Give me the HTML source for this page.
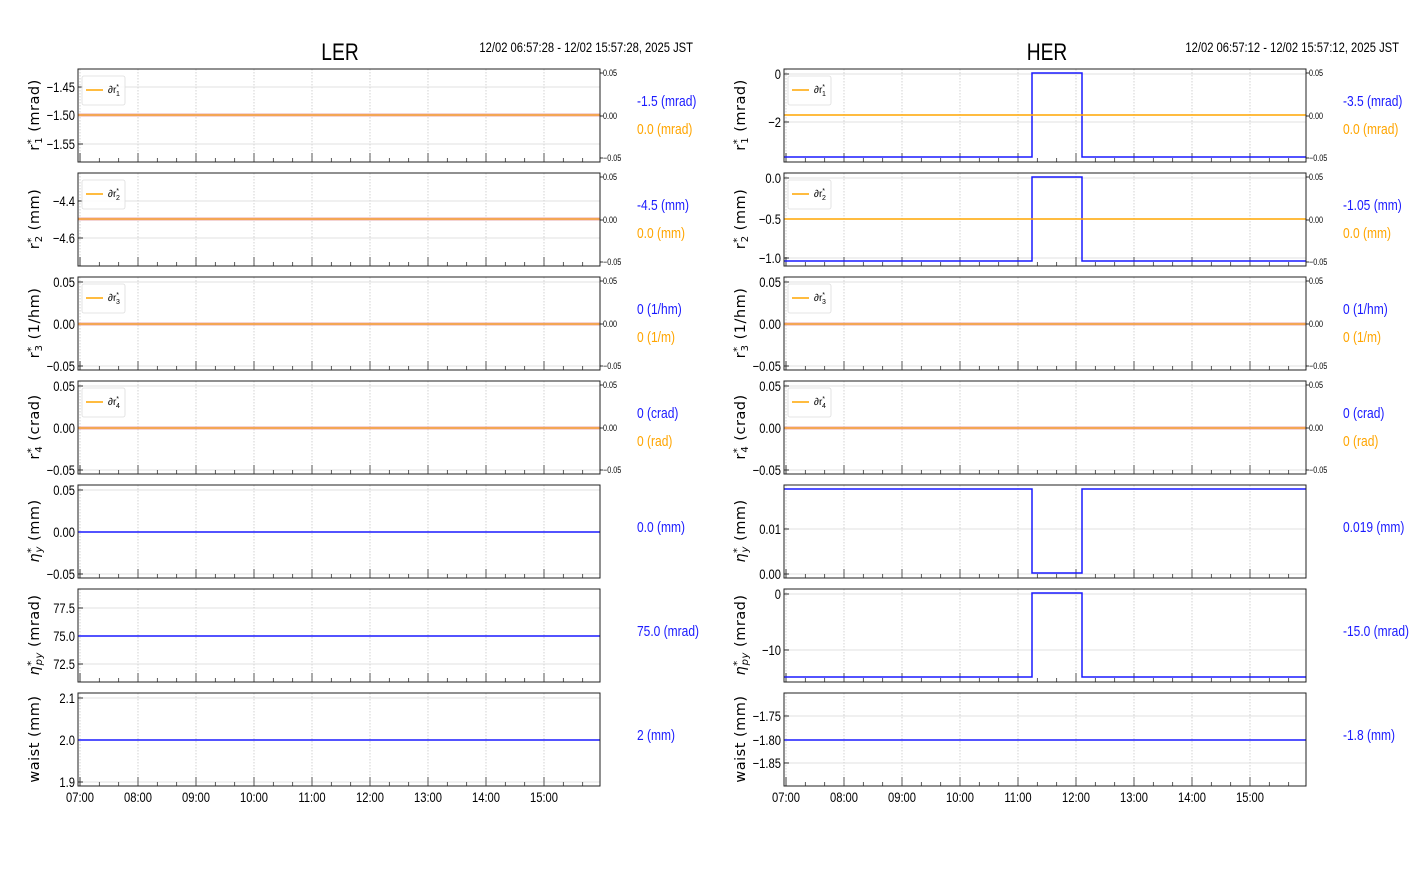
<!DOCTYPE html>
<html><head><meta charset="utf-8"><style>
body{margin:0;background:#fff;width:1412px;height:864px;overflow:hidden}
svg text{font-family:"Liberation Sans",sans-serif}
</style></head><body>
<svg id="s" width="1412" height="864" xmlns="http://www.w3.org/2000/svg">
<text class="n" x="340" y="60" font-size="24" text-anchor="middle" fill="#000">LER</text>
<text class="n" x="693" y="52" font-size="14" text-anchor="end" fill="#000">12/02 06:57:28 - 12/02 15:57:28, 2025 JST</text>
<text class="n" x="1047" y="60" font-size="24" text-anchor="middle" fill="#000">HER</text>
<text class="n" x="1399" y="52" font-size="14" text-anchor="end" fill="#000">12/02 06:57:12 - 12/02 15:57:12, 2025 JST</text>
</svg>
<script>
var s=document.getElementById('s'),h='';
var B='#1a1aff',O='#ffa500';
var ylab=['r<tspan font-size="10" dy="-5">*</tspan><tspan font-size="10" dy="8" dx="-5">1</tspan><tspan dy="-3"> (mrad)</tspan>',
'r<tspan font-size="10" dy="-5">*</tspan><tspan font-size="10" dy="8" dx="-5">2</tspan><tspan dy="-3"> (mm)</tspan>',
'r<tspan font-size="10" dy="-5">*</tspan><tspan font-size="10" dy="8" dx="-5">3</tspan><tspan dy="-3"> (1/hm)</tspan>',
'r<tspan font-size="10" dy="-5">*</tspan><tspan font-size="10" dy="8" dx="-5">4</tspan><tspan dy="-3"> (crad)</tspan>',
'<tspan font-style="italic">η</tspan><tspan font-size="10" dy="-5">*</tspan><tspan font-size="10" dy="8" dx="-5" font-style="italic">y</tspan><tspan dy="-3"> (mm)</tspan>',
'<tspan font-style="italic">η</tspan><tspan font-size="10" dy="-5">*</tspan><tspan font-size="10" dy="8" dx="-5" font-style="italic">py</tspan><tspan dy="-3"> (mrad)</tspan>',
'waist (mm)'];
var L={x0:78,x1:600,t0:80,ax:637,lx:33,p:[
 {yt:[['−1.45',87],['−1.50',115],['−1.55',144]],ly:115,o:1,right:1,a:'-1.5 (mrad)',b:'0.0 (mrad)'},
 {yt:[['−4.4',201],['−4.6',238]],ly:219,o:1,right:1,a:'-4.5 (mm)',b:'0.0 (mm)'},
 {yt:[['0.05',282],['0.00',324],['−0.05',366]],ly:324,o:1,right:1,a:'0 (1/hm)',b:'0 (1/m)'},
 {yt:[['0.05',386],['0.00',428],['−0.05',470]],ly:428,o:1,right:1,a:'0 (crad)',b:'0 (rad)'},
 {yt:[['0.05',490],['0.00',532],['−0.05',574]],ly:532,a:'0.0 (mm)'},
 {yt:[['77.5',608],['75.0',636],['72.5',664]],ly:636,a:'75.0 (mrad)'},
 {yt:[['2.1',698],['2.0',740],['1.9',782]],ly:740,a:'2 (mm)'}]};
var R={x0:784,x1:1306,t0:786,ax:1343,lx:739,p:[
 {yt:[['0',74],['−2',122]],st:[157,73],ol:115,o:1,right:1,a:'-3.5 (mrad)',b:'0.0 (mrad)'},
 {yt:[['0.0',178],['−0.5',219],['−1.0',258]],st:[261,177],ol:219,o:1,right:1,a:'-1.05 (mm)',b:'0.0 (mm)'},
 {yt:[['0.05',282],['0.00',324],['−0.05',366]],ly:324,o:1,right:1,a:'0 (1/hm)',b:'0 (1/m)'},
 {yt:[['0.05',386],['0.00',428],['−0.05',470]],ly:428,o:1,right:1,a:'0 (crad)',b:'0 (rad)'},
 {yt:[['0.01',529],['0.00',574]],st:[489,573],a:'0.019 (mm)'},
 {yt:[['0',594],['−10',650]],st:[677,593],a:'-15.0 (mrad)'},
 {yt:[['−1.75',716],['−1.80',740],['−1.85',763]],ly:740,a:'-1.8 (mm)'}]};
[L,R].forEach(function(S,si){
 S.p.forEach(function(p,i){
  var top=69+104*i,bot=top+93,x0=S.x0,x1=S.x1;
  for(var k=0;k<9;k++){var x=S.t0+58*k;h+='<line x1="'+x+'" y1="'+top+'" x2="'+x+'" y2="'+bot+'" stroke="#c8c8c8" stroke-width="0.8" stroke-dasharray="1.5,1.5"/>';}
  p.yt.forEach(function(t){h+='<line x1="'+x0+'" y1="'+t[1]+'" x2="'+x1+'" y2="'+t[1]+'" stroke="#d6d6d6" stroke-width="0.8"/>';
   h+='<line x1="'+x0+'" y1="'+t[1]+'" x2="'+(x0+5)+'" y2="'+t[1]+'" stroke="#000" stroke-width="0.8"/>';
   h+='<text class="n" x="'+(x0-3)+'" y="'+(t[1]+5)+'" font-size="14" text-anchor="end">'+t[0]+'</text>';});
  for(var m=0;m<=26;m++){var x=S.t0+58*m/3;if(x>x1)break;var maj=m%3==0;h+='<line x1="'+x+'" y1="'+bot+'" x2="'+x+'" y2="'+(bot-(maj?9:4))+'" stroke="#333" stroke-width="0.8"/>';}
  h+='<line x1="'+(x0+2)+'" y1="'+bot+'" x2="'+(x0+2)+'" y2="'+(bot-9)+'" stroke="#333" stroke-width="0.8"/>';
  if(p.st){var lo=p.st[0],hi=p.st[1];h+='<polyline fill="none" stroke="'+B+'" stroke-width="1.5" points="'+x0+','+lo+' 1032,'+lo+' 1032,'+hi+' 1082,'+hi+' 1082,'+lo+' '+x1+','+lo+'"/>';
   if(p.ol)h+='<line x1="'+x0+'" y1="'+p.ol+'" x2="'+x1+'" y2="'+p.ol+'" stroke="'+O+'" stroke-width="1.5"/>';}
  else if(p.o){h+='<line x1="'+x0+'" y1="'+p.ly+'" x2="'+x1+'" y2="'+p.ly+'" stroke="#e8a8a8" stroke-width="3"/><line x1="'+x0+'" y1="'+p.ly+'" x2="'+x1+'" y2="'+p.ly+'" stroke="'+O+'" stroke-width="1"/>';}
  else h+='<line x1="'+x0+'" y1="'+p.ly+'" x2="'+x1+'" y2="'+p.ly+'" stroke="'+B+'" stroke-width="1.6"/>';
  if(p.o){h+='<rect x="'+(x0+4)+'" y="'+(top+7)+'" width="43" height="29" rx="2" fill="#fff" fill-opacity="0.85" stroke="#ddd" stroke-width="0.8"/>';
   h+='<line x1="'+(x0+8)+'" y1="'+(top+21)+'" x2="'+(x0+25)+'" y2="'+(top+21)+'" stroke="'+O+'" stroke-width="1.5"/>';
   h+='<text x="'+(x0+30)+'" y="'+(top+24)+'" font-size="10">∂r<tspan font-size="7" dy="-4">*</tspan><tspan font-size="7" dy="7" dx="-3">'+(i+1)+'</tspan></text>';}
  h+='<rect x="'+x0+'" y="'+top+'" width="'+(x1-x0)+'" height="93" fill="none" stroke="#222" stroke-width="1"/>';
  if(p.right){[[top+4,'0.05'],[top+47,'0.00'],[bot-4,'−0.05']].forEach(function(r){h+='<line x1="'+x1+'" y1="'+r[0]+'" x2="'+(x1+3)+'" y2="'+r[0]+'" stroke="#000" stroke-width="0.8"/><text class="n" x="'+(x1+3)+'" y="'+(r[0]+3)+'" font-size="9">'+r[1]+'</text>';});}
  if(p.b){h+='<text class="n" x="'+S.ax+'" y="'+(top+37)+'" font-size="15" fill="'+B+'">'+p.a+'</text><text class="n" x="'+S.ax+'" y="'+(top+65)+'" font-size="15" fill="'+O+'">'+p.b+'</text>';}
  else h+='<text class="n" x="'+S.ax+'" y="'+(top+47)+'" font-size="15" fill="'+B+'">'+p.a+'</text>';
  var cy=top+46;h+='<text transform="translate('+(S.lx+6)+','+cy+') rotate(-90)" font-size="14.5" text-anchor="middle" style="font-family:\'DejaVu Sans\',sans-serif;letter-spacing:0.5px">'+ylab[i]+'</text>';
 });
 for(var k=0;k<9;k++){h+='<text class="n" x="'+(S.t0+58*k)+'" y="802" font-size="14" text-anchor="middle">'+(k+7<10?'0':'')+(k+7)+':00</text>';}
});
s.insertAdjacentHTML('beforeend',h);
Array.prototype.forEach.call(document.querySelectorAll('text.n'),function(t){var l=t.getComputedTextLength();t.setAttribute('textLength',(l*0.8).toFixed(1));t.setAttribute('lengthAdjust','spacingAndGlyphs');});
</script>
</body></html>
